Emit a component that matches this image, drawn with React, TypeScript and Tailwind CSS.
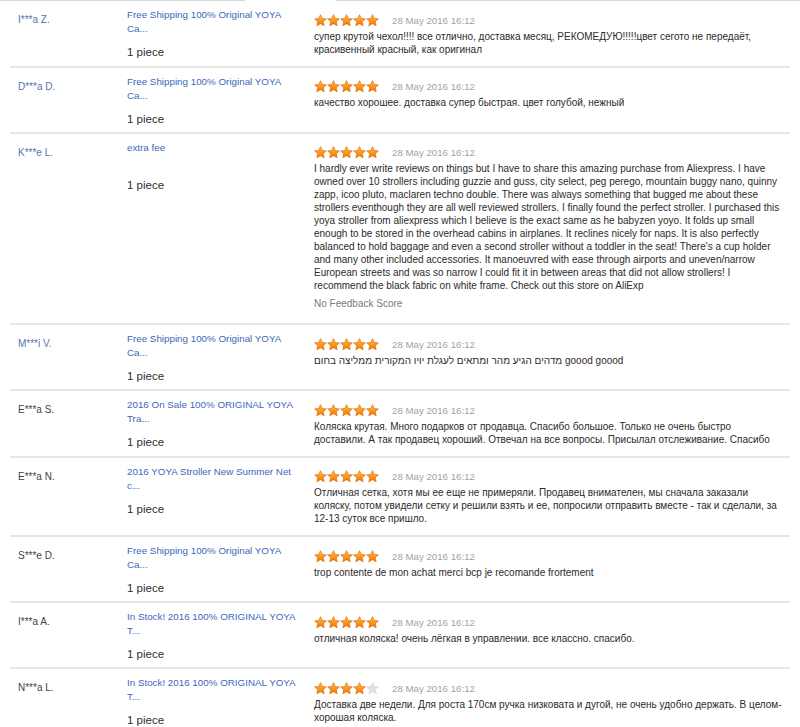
import React from "react";

type Review = {
  name: string;
  nameBlue: boolean;
  title: string;
  stars: number;
  date: string;
  text: string;
  noScore?: boolean;
};

const REVIEWS: Review[] = [
  {
    name: "I***a Z.",
    nameBlue: true,
    title: "Free Shipping 100% Original YOYA Ca...",
    stars: 5,
    date: "28 May 2016 16:12",
    text: "супер крутой чехол!!!! все отлично, доставка месяц, РЕКОМЕДУЮ!!!!!цвет сегото не передаёт, красивенный красный, как оригинал",
  },
  {
    name: "D***a D.",
    nameBlue: true,
    title: "Free Shipping 100% Original YOYA Ca...",
    stars: 5,
    date: "28 May 2016 16:12",
    text: "качество хорошее. доставка супер быстрая. цвет голубой, нежный",
  },
  {
    name: "K***e L.",
    nameBlue: true,
    title: "extra fee",
    stars: 5,
    date: "28 May 2016 16:12",
    text: "I hardly ever write reviews on things but I have to share this amazing purchase from Aliexpress. I have owned over 10 strollers including guzzie and guss, city select, peg perego, mountain buggy nano, quinny zapp, icoo pluto, maclaren techno double. There was always something that bugged me about these strollers eventhough they are all well reviewed strollers. I finally found the perfect stroller. I purchased this yoya stroller from aliexpress which I believe is the exact same as he babyzen yoyo. It folds up small enough to be stored in the overhead cabins in airplanes. It reclines nicely for naps. It is also perfectly balanced to hold baggage and even a second stroller without a toddler in the seat! There's a cup holder and many other included accessories. It manoeuvred with ease through airports and uneven/narrow European streets and was so narrow I could fit it in between areas that did not allow strollers! I recommend the black fabric on white frame. Check out this store on AliExp",
    noScore: true,
  },
  {
    name: "M***i V.",
    nameBlue: true,
    title: "Free Shipping 100% Original YOYA Ca...",
    stars: 5,
    date: "28 May 2016 16:12",
    text: "מדהים הגיע מהר ומתאים לעגלת יויו המקורית ממליצה בחום goood goood",
  },
  {
    name: "E***a S.",
    nameBlue: false,
    title: "2016 On Sale 100% ORIGINAL YOYA Tra...",
    stars: 5,
    date: "28 May 2016 16:12",
    text: "Коляска крутая. Много подарков от продавца. Спасибо большое. Только не очень быстро доставили. А так продавец хороший. Отвечал на все вопросы. Присылал отслеживание. Спасибо",
  },
  {
    name: "E***a N.",
    nameBlue: false,
    title: "2016 YOYA Stroller New Summer Net c...",
    stars: 5,
    date: "28 May 2016 16:12",
    text: "Отличная сетка, хотя мы ее еще не примеряли. Продавец внимателен, мы сначала заказали коляску, потом увидели сетку и решили взять и ее, попросили отправить вместе - так и сделали, за 12-13 суток все пришло.",
  },
  {
    name: "S***e D.",
    nameBlue: false,
    title: "Free Shipping 100% Original YOYA Ca...",
    stars: 5,
    date: "28 May 2016 16:12",
    text: "trop contente de mon achat merci bcp je recomande frortement",
  },
  {
    name: "I***a A.",
    nameBlue: false,
    title: "In Stock! 2016 100% ORIGINAL YOYA T...",
    stars: 5,
    date: "28 May 2016 16:12",
    text: "отличная коляска! очень лёгкая в управлении. все классно. спасибо.",
  },
  {
    name: "N***a L.",
    nameBlue: false,
    title: "In Stock! 2016 100% ORIGINAL YOYA T...",
    stars: 4,
    date: "28 May 2016 16:12",
    text: "Доставка две недели. Для роста 170см ручка низковата и дугой, не очень удобно держать. В целом-хорошая коляска.",
  },
];

function Star({ filled, id }: { filled: boolean; id: string }) {
  return (
    <svg width="13" height="13" viewBox="0 0 24 24" className="block">
      <defs>
        <linearGradient id={id} x1="0" y1="0" x2="0" y2="1">
          <stop offset="0" stopColor="#ffc04a" />
          <stop offset="1" stopColor="#f27400" />
        </linearGradient>
      </defs>
      <path
        d="M12 1.2l3.2 7 7.6.8-5.7 5.1 1.7 7.6L12 17.8l-6.8 3.9 1.7-7.6-5.7-5.1 7.6-.8z"
        fill={filled ? `url(#${id})` : "#e2e2e2"}
        stroke={filled ? "#e06800" : "#d6d6d6"}
        strokeWidth="1.2"
        strokeLinejoin="round"
      />
    </svg>
  );
}

function Stars({ count, rowKey }: { count: number; rowKey: number }) {
  return (
    <div className="flex">
      {[0, 1, 2, 3, 4].map((i) => (
        <Star key={i} filled={i < count} id={`g-${rowKey}-${i}`} />
      ))}
    </div>
  );
}

export default function App() {
  return (
    <div
      className="w-[800px] h-[727px] overflow-hidden bg-white"
      style={{ fontFamily: '"Liberation Sans", Arial, sans-serif' }}
    >
      {/* top edge of the previous row */}
      <div className="flex h-px">
        <div className="w-[245px] bg-[#d8d8d8]" />
        <div className="w-[91px]" />
        <div className="flex-1 bg-[#d8d8d8]" />
      </div>

      <div className="mx-[10px]">
        {REVIEWS.map((r, idx) => (
          <div key={idx} className="flex pt-[7px] pb-[6px] border-b-2 border-[#e6e6e6]">
            {/* Buyer */}
            <div className="w-[117px] pl-[8px] shrink-0">
              <div
                className={`mt-[5px] text-[10px] leading-[14px] ${
                  r.nameBlue ? "text-[#5573b3]" : "text-[#3f3f3f]"
                }`}
              >
                {r.name}
              </div>
            </div>

            {/* Product */}
            <div className="w-[187px] shrink-0">
              <div className="w-[174px] h-[28px] text-[9.8px] leading-[14px] text-[#3d68b8]">
                {r.title}
              </div>
              <div className="mt-[9px] text-[11.5px] leading-[14px] text-[#2e2e2e]">1 piece</div>
            </div>

            {/* Feedback */}
            <div className="w-[470px] pb-[4px]">
              <div className="flex items-center h-[13px] mt-[5.5px]">
                <Stars count={r.stars} rowKey={idx} />
                <span className="ml-[13px] text-[9.7px] text-[#a3a3a3] leading-[13px]">{r.date}</span>
              </div>
              <div className="mt-[3px] text-[10px] leading-[13px] text-[#2b2b2b]">{r.text}</div>
              {r.noScore && (
                <div className="mt-[5px] mb-[3px] text-[10px] leading-[13px] text-[#7a7a7a]">
                  No Feedback Score
                </div>
              )}
            </div>
          </div>
        ))}
      </div>
    </div>
  );
}
